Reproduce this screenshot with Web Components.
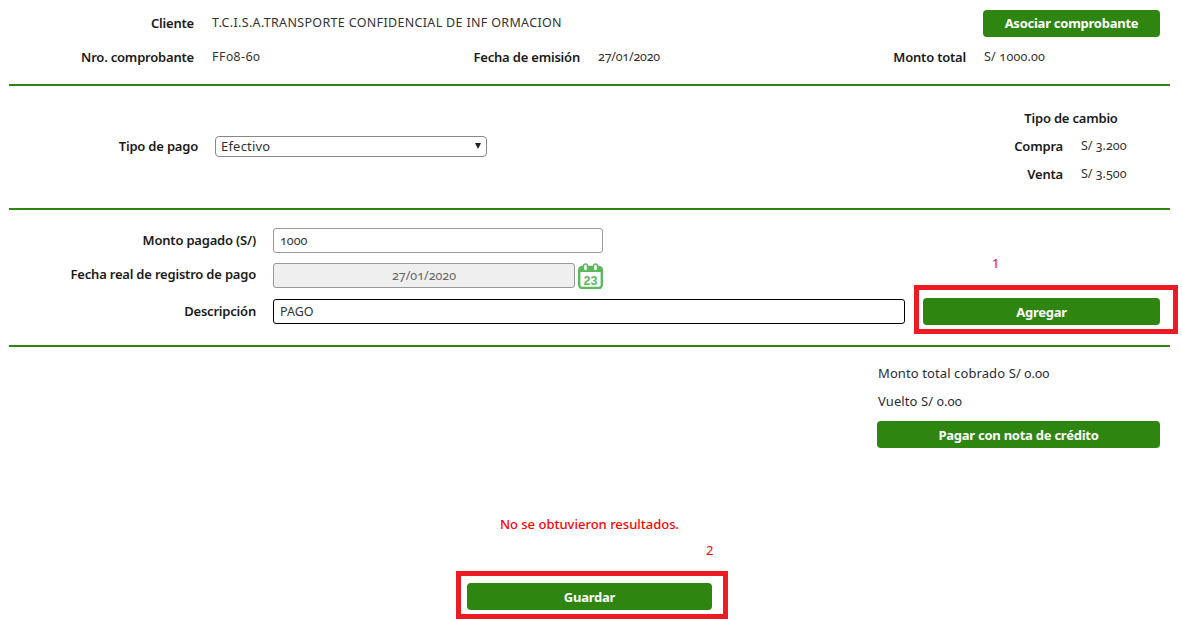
<!DOCTYPE html>
<html lang="es">
<head>
<meta charset="utf-8">
<title>Pago</title>
<style>
  html, body { margin: 0; background: #fff; }
  body {
    font-family: "Noto Sans", "Open Sans", sans-serif;
    font-size: 13px;
    color: #222;
    font-variant-numeric: oldstyle-nums;
  }
</style>
</head>
<body>
<template id="pay-page-tpl">
  <style>
    :host { display: block; width: 1182px; height: 620px; overflow: hidden; }
    .wrap { padding: 0 12px 0 9px; }
    .head { height: 84px; box-sizing: border-box; padding: 10px 0 0 3px; display: grid; grid-template-rows: 27px 20px; row-gap: 10px; align-content: start; }
    .top { display: grid; grid-template-columns: 182px 1fr 177px; column-gap: 18px; align-items: center; padding-right: 10px; }
    .top > * { padding-bottom: 1px; box-sizing: border-box; }
    .client { letter-spacing: .33px; }
    .line { display: grid; grid-template-columns: repeat(3, 386px); align-items: center; }
    .type { height: 122px; box-sizing: border-box; padding-bottom: 2px; display: grid; grid-template-columns: 189px 272px 1fr; column-gap: 17px; align-items: center; }
    .rates { display: grid; grid-template-columns: 108px 60px; column-gap: 18px; row-gap: 10px; justify-self: end; margin-right: 29px; line-height: 18px; }
    .rates .title { grid-column: 1 / 3; text-align: center; padding-left: 46px; }
    .entry { height: 135px; display: grid; grid-template-columns: 247px 632px 1fr; column-gap: 17px; grid-template-rows: 25px 26px 25px; row-gap: 10px; align-content: start; padding-top: 18px; box-sizing: border-box; align-items: center; }
    .date { display: flex; gap: 3px; align-items: flex-start; width: 330px; }
    .narrow { width: 330px; }
    .add { padding-right: 10px; padding-left: 1px; }
    .totals { height: 167px; display: flex; flex-direction: column; align-items: flex-end; padding: 16px 10px 0 0; box-sizing: border-box; }
    .totals .col { width: 283px; display: flex; flex-direction: column; }
    .totals span { line-height: 20px; color: #2a2a3a; margin-bottom: 8px; padding-left: 1px; letter-spacing: .1px; }
    .totals span + span { margin-bottom: 10px; }
    .msg { text-align: center; color: #f00; line-height: 20px; font-weight: 500; }
    .save { display: flex; justify-content: center; padding-top: 49px; }
    .save pay-button { width: 245px; }
  </style>
  <div class="wrap">
    <section class="head">
      <div class="top">
        <pay-label>Cliente</pay-label>
        <pay-value class="client">T.C.I.S.A.TRANSPORTE CONFIDENCIAL DE INF ORMACION</pay-value>
        <pay-button>Asociar comprobante</pay-button>
      </div>
      <div class="line">
        <pay-pair label="Nro. comprobante" value="FF08-60" width="182" style="--vs:.6px"></pay-pair>
        <pay-pair label="Fecha de emisión" value="27/01/2020" width="182" style="--vs:-.2px"></pay-pair>
        <pay-pair label="Monto total" value="S/ 1000.00" width="182" style="--vs:.2px"></pay-pair>
      </div>
    </section>
    <pay-rule></pay-rule>
    <section class="type">
      <pay-label>Tipo de pago</pay-label>
      <pay-select>Efectivo</pay-select>
      <div class="rates">
        <pay-label class="title" style="text-align:center">Tipo de cambio</pay-label>
        <pay-label>Compra</pay-label><pay-value>S/ 3.200</pay-value>
        <pay-label>Venta</pay-label><pay-value>S/ 3.500</pay-value>
      </div>
    </section>
    <pay-rule></pay-rule>
    <section class="entry">
      <pay-label style="padding-bottom:1px">Monto pagado (S/)</pay-label>
      <pay-field class="narrow">1000</pay-field>
      <div></div>
      <pay-label style="padding-bottom:4px">Fecha real de registro de pago</pay-label>
      <div class="date">
        <pay-field disabled style="flex:1">27/01/2020</pay-field>
        <pay-calendar></pay-calendar>
      </div>
      <div></div>
      <pay-label style="padding-bottom:1px">Descripción</pay-label>
      <pay-field focused>PAGO</pay-field>
      <div class="add">
        <mark-box num="1" box="-13px -18px -9px -9px" numpos="-44px auto auto 69px">
          <pay-button>Agregar</pay-button>
        </mark-box>
      </div>
    </section>
    <pay-rule></pay-rule>
    <section class="totals">
      <div class="col">
        <span>Monto total cobrado S/ 0.00</span>
        <span>Vuelto S/ 0.00</span>
        <pay-button>Pagar con nota de crédito</pay-button>
      </div>
    </section>
    <div class="msg">No se obtuvieron resultados.</div>
    <div class="save">
      <mark-box num="2" box="-12px -16px -9px -11px" numpos="-42px auto auto 239px">
        <pay-button>Guardar</pay-button>
      </mark-box>
    </div>
  </div>
</template>

<script>
  function define(name, css, html) {
    customElements.define(name, class extends HTMLElement {
      connectedCallback() {
        if (this.shadowRoot) return;
        this.attachShadow({ mode: 'open' }).innerHTML = `<style>${css}</style>${html}`;
      }
    });
  }

  customElements.define('pay-page', class extends HTMLElement {
    connectedCallback() {
      this.attachShadow({ mode: 'open' });
      this.shadowRoot.appendChild(document.getElementById('pay-page-tpl').content.cloneNode(true));
    }
  });

  define('pay-label', `:host { display: block; text-align: right; font-weight: 600; color: #1a1a1a; white-space: nowrap; line-height: 18px; letter-spacing: -.2px; }`, `<slot></slot>`);

  define('pay-value', `:host { display: block; color: #333; white-space: nowrap; line-height: 18px; font-size: 12.5px; letter-spacing: var(--vs, 0); }`, `<slot></slot>`);

  define('pay-rule', `:host { display: block; height: 2px; background: #2e8510; }`, ``);

  define('pay-button', `
    :host { display: flex; align-items: center; justify-content: center; height: 27px; background: #2e8510; color: #fff; font-weight: 700; border-radius: 4px; white-space: nowrap; letter-spacing: -.25px; }
  `, `<slot></slot>`);

  define('pay-field', `
    :host { display: flex; align-items: center; box-sizing: border-box; height: 25px; padding: 0 6px; border: 1px solid #999; border-radius: 3px; background: #fff; color: #333; font-size: 12.5px; }
    :host([focused]) { border-color: #000; }
    :host([disabled]) { background: #efefef; color: #666; justify-content: center; }
  `, `<slot></slot>`);

  define('pay-select', `
    :host { display: flex; align-items: center; justify-content: space-between; box-sizing: border-box; height: 21px; padding: 0 5px; border: 1px solid #888; border-radius: 4px; color: #333; letter-spacing: .2px; }
    i { width: 0; height: 0; border: 3.5px solid transparent; border-top: 6px solid #222; border-bottom: 0; }
  `, `<slot></slot><i></i>`);

  define('pay-calendar', `
    :host { display: block; width: 25px; height: 26px; }
    svg { display: block; }
    text { font: 700 12.5px "Liberation Sans", sans-serif; fill: #5cb85c; }
  `, `<svg width="25" height="26" viewBox="0 0 25 26">
      <rect x="1.2" y="4" width="22.6" height="21" rx="3" fill="#fff" stroke="#5cb85c" stroke-width="2.4"/>
      <path d="M2 9V6.5a2.5 2.500 0 0 1 2.5-2.5h16A2.5 2.500 0 0 1 23 6.500V9z" fill="#5cb85c"/>
      <rect x="5.500" y="1" width="4" height="7" rx="2" fill="#fff" stroke="#5cb85c" stroke-width="1.4"/>
      <rect x="15.500" y="1" width="4" height="7" rx="2" fill="#fff" stroke="#5cb85c" stroke-width="1.4"/>
      <text x="12.500" y="21.800" text-anchor="middle">23</text>
    </svg>`);

  customElements.define('pay-pair', class extends HTMLElement {
    connectedCallback() {
      this.attachShadow({ mode: 'open' }).innerHTML = `
        <style>
          :host { display: grid; grid-template-columns: ${this.getAttribute('width')}px 1fr; column-gap: 18px; align-items: center; }
          pay-label { padding-bottom: 1px; }
        </style>
        <pay-label>${this.getAttribute('label')}</pay-label>
        <pay-value>${this.getAttribute('value')}</pay-value>`;
    }
  });

  // red annotation frame and its number, laid over the button they point at
  customElements.define('mark-box', class extends HTMLElement {
    connectedCallback() {
      this.attachShadow({ mode: 'open' }).innerHTML = `
        <style>
          :host { display: block; position: relative; }
          .frame { position: absolute; inset: ${this.getAttribute('box')}; border: 5px solid #ed1c24; pointer-events: none; }
          .num { position: absolute; inset: ${this.getAttribute('numpos')}; color: #f00; font-size: 13px; line-height: 18px; font-variant-numeric: lining-nums; }
        </style>
        <slot></slot>
        <div class="frame"></div>
        <div class="num">${this.getAttribute('num')}</div>`;
    }
  });

  document.body.appendChild(document.createElement('pay-page'));
</script>
</body>
</html>
